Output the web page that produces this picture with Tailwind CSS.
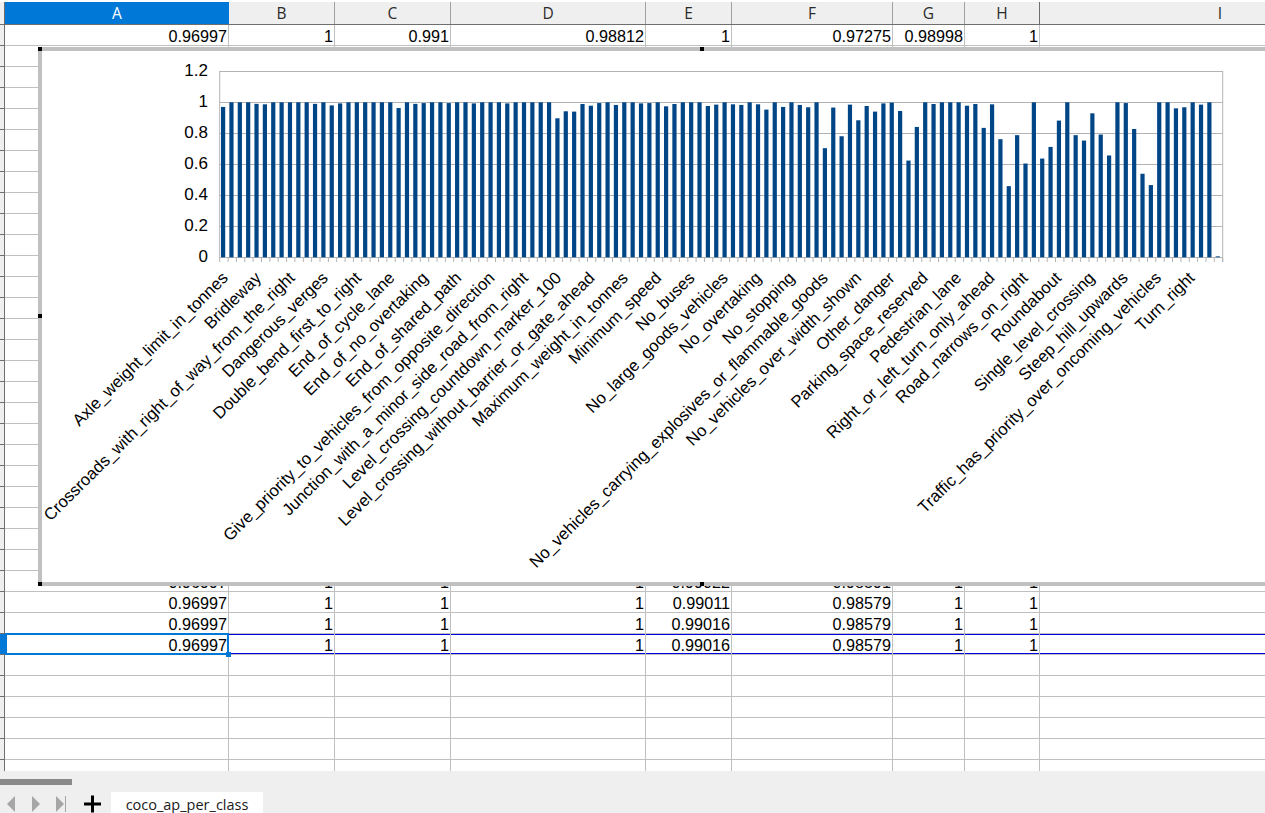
<!doctype html>
<html>
<head>
<meta charset="utf-8" />
<title>coco_ap_per_class</title>
<script src="https://cdn.jsdelivr.net/npm/@tailwindcss/browser@4"></script>
</head>
<body class="bg-white overflow-hidden">
<div class="relative flex flex-col w-[1265px] h-[813px] overflow-hidden font-['Liberation_Sans',sans-serif]">

  <!-- column headers -->
  <div class="flex h-[23px] mt-[2px] shrink-0 bg-[#efefef] border-b border-[#6e6e6e] text-[15.5px] leading-[22px] text-[#2b2b2b] font-['Open_Sans',sans-serif] text-center">
    <div class="w-[5px] shrink-0 border-r border-[#6e6e6e]"></div>
    <div class="w-[224px] shrink-0 bg-[#0078d7] text-white">A</div>
    <div class="w-[106px] shrink-0 border-r border-[#a0a0a0]">B</div>
    <div class="w-[116px] shrink-0 border-r border-[#a0a0a0]">C</div>
    <div class="w-[195px] shrink-0 border-r border-[#a0a0a0]">D</div>
    <div class="w-[86px] shrink-0 border-r border-[#a0a0a0]">E</div>
    <div class="w-[161px] shrink-0 border-r border-[#a0a0a0]">F</div>
    <div class="w-[72px] shrink-0 border-r border-[#a0a0a0]">G</div>
    <div class="w-[75px] shrink-0 border-r border-[#6e6e6e]">H</div>
    <div class="w-[360px] shrink-0">I</div>
  </div>

  <!-- cells -->
  <div id="sheet" class="flex-1 overflow-hidden text-[16.2px] leading-[22px] text-black"></div>

  <!-- sheet tabs -->
  <div class="relative h-[42px] shrink-0 bg-[#efefef]">
    <div class="w-[72px] h-[6px] mt-[8px] bg-[#8a8a8a]"></div>
    <svg width="111" height="42" viewBox="0 771 111 42" class="absolute left-0 top-0">
      <path d="M15 796v16l-8-8z" fill="#a6a6a6"/>
      <path d="M32 796v16l8-8z" fill="#a6a6a6"/>
      <path d="M56 796v16l8-8z" fill="#a6a6a6"/>
      <path d="M65.500 796v16" stroke="#a6a6a6"/>
      <path d="M84 804h17M92.500 795.500v17" stroke="#000" stroke-width="3" fill="none"/>
    </svg>
    <div class="absolute left-[111px] top-[21px] w-[152px] h-[21px] bg-white text-center text-[14.5px] leading-[25px] text-[#1a1a1a] font-['Open_Sans',sans-serif]">coco_ap_per_class</div>
  </div>

  <!-- chart object over the cells -->
  <div class="absolute left-[38px] top-[47px] w-[1240px] h-[539px] bg-white border-4 border-[#c0c0c0]">
    <svg id="chart" width="1232" height="531" viewBox="42 51 1232 531" class="block"></svg>
  </div>
  <!-- selection handles -->
  <div class="absolute left-[38px] top-[47px] w-[4px] h-[4px] bg-black"></div>
  <div class="absolute left-[700px] top-[47px] w-[4px] h-[4px] bg-black"></div>
  <div class="absolute left-[38px] top-[314px] w-[4px] h-[4px] bg-black"></div>
  <div class="absolute left-[38px] top-[582px] w-[4px] h-[4px] bg-black"></div>
  <div class="absolute left-[700px] top-[582px] w-[4px] h-[4px] bg-black"></div>

  <!-- cell cursor -->
  <div class="absolute left-[0px] top-[634px] w-[5px] h-[20px] bg-[#0078d7]"></div>
  <div class="absolute left-[5px] top-[633px] w-[224px] h-[22px] border-2 border-[#0078d7]"></div>
  <div class="absolute left-[226px] top-[652px] w-[5px] h-[5px] bg-[#0078d7]"></div>
</div>

<script>
const widths = ['w-[224px]', 'w-[106px]', 'w-[116px]', 'w-[195px]', 'w-[86px]', 'w-[161px]', 'w-[72px]', 'w-[75px]', 'w-[360px]']
const filled = {
  0: ['0.96997', '1', '0.991', '0.98812', '1', '0.97275', '0.98998', '1'],
  26: ['0.96997', '1', '1', '1', '0.99022', '0.98591', '1', '1'],
  27: ['0.96997', '1', '1', '1', '0.99011', '0.98579', '1', '1'],
  28: ['0.96997', '1', '1', '1', '0.99016', '0.98579', '1', '1'],
  29: ['0.96997', '1', '1', '1', '0.99016', '0.98579', '1', '1']
}

let rows = ''
for (let r = 0; r < 36; r++) {
  const values = filled[r] || []
  const selected = r === 29
  rows += `<div class="flex h-[21px]"><div class="w-[5px] shrink-0 bg-[#efefef] border-r border-b border-[#6e6e6e]"></div>`
  widths.forEach((w, c) => {
    const line = selected
      ? 'border-b border-r border-b-[#c0c0c0] border-r-[#c0c0c0] shadow-[inset_0_1px_0_#0000e0,inset_0_-1px_0_#0000e0]'
      : (c === 8 ? 'border-b border-[#c0c0c0]' : 'border-b border-r border-[#c0c0c0]')
    rows += `<div class="${w} h-[21px] shrink-0 ${line} text-right pr-[1px]">${values[c] || ''}</div>`
  })
  rows += '</div>'
}
document.getElementById('sheet').innerHTML = rows

const ap = [
  .97,1,1,1,.99,.987,1,1,1,1,1,.99,1,.98,.993,1,1,1,1,1,1,.963,1,.99,
  .995,1,1,.995,1,1,.993,1,1,1,.993,1,1,1,1,1,.897,.942,.94,.989,.978,.995,1,.983,1,1,
  .993,.995,1,.974,.989,1,1,1,.976,.985,1,.987,.983,1,.987,.953,1,.97,1,.983,.968,1,.704,.966,.781,
  .985,.884,.976,.94,.993,.998,.944,.624,.841,1,.989,1,1,1,.978,.989,.835,.987,.762,.459,.788,.605,1,
  .637,.712,.882,1,.788,.753,.929,.792,.657,1,.995,.828,.539,.466,1,1,.961,.968,1,.985,1,.006
]
const labels = [
  'Axle_weight_limit_in_tonnes', 'Bridleway', 'Crossroads_with_right_of_way_from_the_right', 'Dangerous_verges',
  'Double_bend_first_to_right', 'End_of_cycle_lane', 'End_of_no_overtaking', 'End_of_shared_path',
  'Give_priority_to_vehicles_from_opposite_direction', 'Junction_with_a_minor_side_road_from_right',
  'Level_crossing_countdown_marker_100', 'Level_crossing_without_barrier_or_gate_ahead', 'Maximum_weight_in_tonnes',
  'Minimum_speed', 'No_buses', 'No_large_goods_vehicles', 'No_overtaking', 'No_stopping',
  'No_vehicles_carrying_explosives_or_flammable_goods', 'No_vehicles_over_width_shown', 'Other_danger',
  'Parking_space_reserved', 'Pedestrian_lane', 'Right_or_left_turn_only_ahead', 'Road_narrows_on_right', 'Roundabout',
  'Single_level_crossing', 'Steep_hill_upwards', 'Traffic_has_priority_over_oncoming_vehicles', 'Turn_right'
]

const left = 219.7, right = 1222.7, step = (right - left) / 120
let svg = ''
// grid and y axis labels
;['1.2', '1', '0.8', '0.6', '0.4', '0.2', '0'].forEach((t, i) => {
  const y = 71.5 + 31 * i
  svg += `<path d="M${left} ${y}H${right}" stroke="#b3b3b3"/>`
  svg += `<text x="208" y="${y + 4}" text-anchor="end" font-size="17" fill="#000">${t}</text>`
})
svg += `<path d="M${left} 71V258M${right} 71V262" stroke="#b3b3b3"/>`
// ticks
for (let i = 0; i <= 120; i++) {
  const x = (left + step * i).toFixed(1)
  svg += `<path d="M${x} 258V262" stroke="#b3b3b3"/>`
}
// bars
ap.forEach((v, i) => {
  const h = v * 155
  svg += `<rect x="${(221 + step * i).toFixed(2)}" y="${(257.3 - h).toFixed(2)}" width="4.2" height="${h.toFixed(2)}" fill="#004586"/>`
})
// x axis labels, one for every four classes
labels.forEach((t, i) => {
  const x = 229 + 33.33 * i
  svg += `<text transform="translate(${x.toFixed(1)} 279) rotate(-44.7)" text-anchor="end" font-size="16.7" fill="#000">${t}</text>`
})
document.getElementById('chart').innerHTML = svg
</script>
</body>
</html>
